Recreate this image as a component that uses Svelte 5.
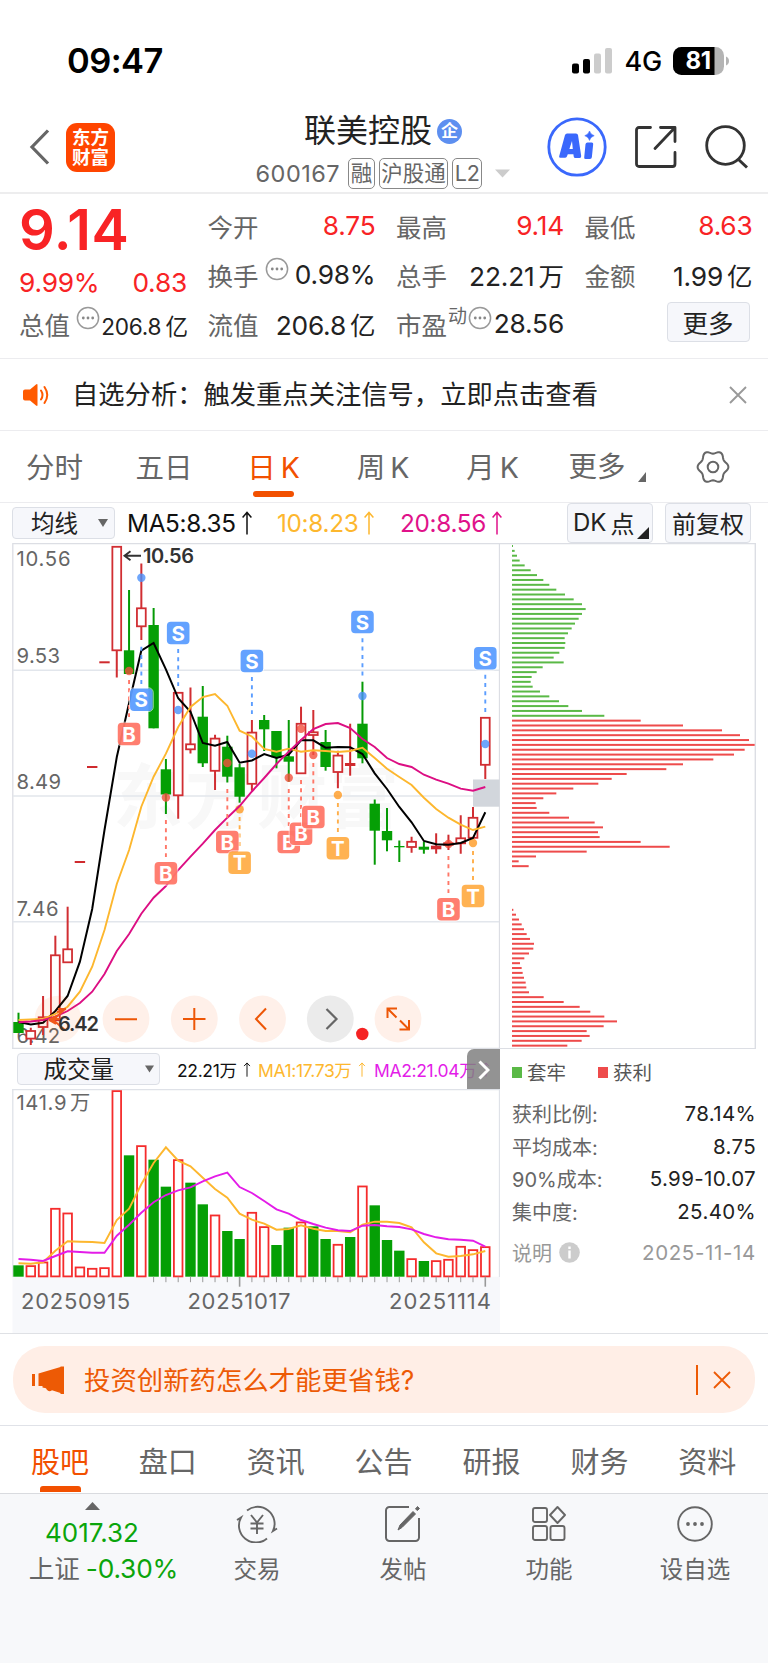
<script>
  const X0 = 18.5;
  const STEP = 12.284;
  const cx = (i) => X0 + STEP * i;

  // type, high, open/close top, open/close bottom, low (canvas units)
  const candles = [
    ['g', 1012.7, 1022, 1033, 1033], ['h', 1027.7, 1030.7, 1038.3, 1045], ['h', 996, 1017, 1026.7, 1035],
    ['h', 935.7, 955, 1020, 1020], ['h', 906.7, 949, 962, 962], ['d', 862, 862, 862, 862], ['d', 767, 767, 767, 767],
    ['d', 662.3, 662.3, 662.3, 662.3], ['h', 546, 546.5, 650, 677.5], ['g', 590, 650.3, 674, 674],
    ['h', 563.5, 608, 626, 640], ['g', 608, 625, 728.3, 728.3], ['g', 759, 769.3, 794.5, 814],
    ['h', 692, 692.5, 795, 818.7], ['h', 687.5, 744, 749, 753.5], ['g', 686, 716.7, 763.3, 767],
    ['h', 734.7, 738.3, 770.5, 790], ['g', 735.7, 746.7, 776.7, 782.5], ['g', 764, 767.3, 796.7, 802.7],
    ['h', 720, 732.3, 783.5, 790.7], ['g', 715, 720, 729.3, 751], ['g', 731, 731, 757.3, 768.3],
    ['g', 720, 756.3, 761.7, 781.7], ['h', 706.7, 723.5, 773, 773], ['h', 710, 732, 734.7, 755],
    ['g', 730, 742, 767, 770.7], ['h', 750.7, 755.3, 771.7, 788.3], ['r', 723.7, 763, 766, 775.7],
    ['g', 681.7, 723.7, 758.3, 763.3], ['g', 799.5, 803.7, 830.7, 864.7], ['g', 808, 831, 840.3, 851.3],
    ['g', 840.5, 846, 847.3, 862], ['h', 836.7, 841.5, 846.7, 852.7], ['g', 841.7, 846.7, 849.7, 853.7],
    ['r', 833.3, 845.7, 849.3, 853.7], ['r', 834.7, 842.3, 845.7, 850], ['h', 815.3, 838, 843, 853.7],
    ['h', 807, 817.5, 837.5, 837.5], ['h', 717, 717.5, 764.5, 779]
  ];

  const ma5 = [1022, 1024.5, 1022.7, 1011, 996, 961.7, 909, 830, 757, 703, 650.7, 643, 669.3, 698.3, 711.7, 743, 745.7, 742, 762.7, 760.5, 754, 758, 754.7, 740.3, 740.3, 747.7, 747, 747.3, 754, 773.3, 789, 807, 822.3, 841, 844.3, 844.7, 843, 838, 812.3];
  const ma10 = [1020, 1019.5, 1019, 1014, 1006.7, 991.7, 966.7, 930, 884, 850, 806.7, 776.7, 753.7, 727, 707, 697, 694, 705.7, 730.7, 736.5, 749, 751.7, 748.7, 751.7, 750.3, 751, 752, 751, 747.7, 758, 768.7, 777, 785, 797.7, 809, 817.7, 824.7, 830, 826.7];
  const ma20 = [1022.3, 1021.5, 1020, 1016.7, 1011, 1003, 991.7, 974, 951, 934, 913.7, 897.7, 886, 870, 856.7, 843.7, 830, 817.7, 806, 791.5, 778, 764, 751.7, 740, 729, 724, 723, 728, 739, 747, 758, 764, 767, 774.7, 779.7, 783.7, 788.7, 790.7, 787];

  // kind, candle index, label y, dash start, dash end, dot y
  const markers = [
    ['B', 9, 734, 680, 717, 671], ['S', 10, 699.7, 646.7, 684, 577.7], ['B', 12, 873.3, 820, 857, 797.5],
    ['S', 13, 633, 649, 686, 710], ['B', 17, 842, 789, 826, 763], ['T', 18, 862.7, 817, 846, 809.3],
    ['S', 19, 661, 677, 714, 753.7], ['B', 22, 842, 789, 826, 777.7], ['B', 23, 833.7, 780, 817, 728.7],
    ['B', 24, 817, 763, 800, 755], ['T', 26, 848.3, 803, 832, 795], ['S', 28, 622, 638.3, 675.7, 696],
    ['B', 35, 909.3, 856, 893, 844], ['T', 37, 896, 851, 880, 843], ['S', 38, 658.3, 674.7, 712, 744]
  ];
  const tone = { S: '#5b9dff', B: '#ff7768', T: '#ffae49' };
  const dotTone = { S: '#4a90fa', B: '#f4503c', T: '#ff9a22' };

  const volumes = [676, 676, 665, 504, 518, 680, 684, 682, 151, 346, 316, 359, 440, 358, 428, 493, 524, 573, 597, 516, 559, 615, 563, 545, 559, 597, 612, 591, 437, 496, 600, 632, 655, 663, 661, 657, 618, 628, 619];
  const up = [0,1,1,1,1,1,1,1,1,0,1,0,0,1,0,0,1,0,0,1,1,0,0,1,0,0,1,0,1,0,0,0,1,0,1,1,1,1,1];
  const vma1 = [670, 671, 667, 632, 604, 605, 606, 609, 540, 506, 433, 369, 322, 362, 379, 413, 447, 473, 521, 539, 551, 569, 567, 556, 566, 573, 573, 577, 554, 545, 545, 549, 562, 607, 640, 650, 648, 643, 633];
  const vma2 = [657, 659, 663, 648, 634, 636, 638, 638, 587, 554, 518, 487, 465, 451, 442, 424, 409, 398, 441, 459, 483, 508, 521, 540, 552, 563, 571, 573, 557, 555, 559, 561, 568, 582, 592, 598, 599, 602, 620];
  const vy = (v) => 1040 + v / 3;
  const line = (a, f = (v) => v) => a.map((v, i) => `${cx(i).toFixed(1)},${f(v).toFixed(1)}`).join(' ');

  const chipsTop = [39, 44, 51, 59, 74, 92, 111, 130, 148, 169, 195, 221, 246, 257, 246, 236, 225, 215, 204, 194, 196, 194, 178, 161, 191, 128, 110, 95, 92, 98, 120, 148, 177, 205, 246, 313];
  const chipsMid = [422, 549, 666, 720, 747, 764, 734, 702, 640, 549, 499, 380, 335, 295, 220, 169, 130, 107, 110, 148, 207, 284, 309, 294, 299, 422, 509, 260, 108, 56, 86];
  const chipsLow = [40, 48, 57, 65, 72, 80, 90, 102, 100, 87, 73, 60, 65, 68, 72, 77, 79, 87, 131, 191, 239, 271, 313, 351, 311, 260, 269, 245, 202];
  const chip = (arr, start, color) => arr.map((v, i) => ({ y: 546 + (start + i) * 4.851, w: (v - 36) / 3, color }));
  const chips = [...chip(chipsTop, 0, '#5ab946'), ...chip(chipsMid, 36, '#ee4b4b'), ...chip(chipsLow, 75, '#ee4b4b')];

  // six-lobed outline of the settings gear
  const gear = Array.from({ length: 72 }, (_, k) => {
    const t = (k * Math.PI) / 36;
    const r = 13.9 + 1.5 * Math.cos(6 * t);
    return `${(18 + r * Math.cos(t)).toFixed(2)},${(17 + 1.07 * r * Math.sin(t)).toFixed(2)}`;
  }).join(' ');

  const stats = [['获利比例:', '78.14%'], ['平均成本:', '8.75'], ['90%成本:', '5.99-10.07'], ['集中度:', '25.40%']];
  const tabs = ['股吧', '盘口', '资讯', '公告', '研报', '财务', '资料'];
</script>

{#snippet more()}
  <svg class="dots" width="24" height="24" viewBox="0 0 24 24">
    <circle cx="12" cy="12" r="10.6" fill="none" stroke="#999" stroke-width="1.5" />
    <circle cx="7.3" cy="12" r="1.4" fill="#888" /><circle cx="12" cy="12" r="1.4" fill="#888" /><circle cx="16.7" cy="12" r="1.4" fill="#888" />
  </svg>
{/snippet}

{#snippet arrow(w, h)}
  <svg class="arr" width={w} height={h} viewBox="0 0 12 24" preserveAspectRatio="none">
    <path d="M6 23.5V1.5M1.6 6.5L6 1.5l4.4 5" fill="none" stroke="currentColor" stroke-width="1.5" />
  </svg>
{/snippet}

<div class="page">
  <div class="status">
    <span class="time">09:47</span>
    <div class="sys">
      <svg width="40" height="26" viewBox="0 0 40 26">
        <rect x="0" y="15.5" width="7" height="10" rx="2" /><rect x="11" y="11" width="7" height="14.5" rx="2" />
        <rect x="22" y="5.5" width="7" height="20" rx="2" fill="#ccc" /><rect x="33" y="0" width="7" height="25.5" rx="2" fill="#ccc" />
      </svg>
      <span class="net">4G</span>
      <svg width="57" height="28" viewBox="0 0 57 28">
        <defs><clipPath id="cell"><rect width="51" height="28" rx="8.5" /></clipPath></defs>
        <g clip-path="url(#cell)"><rect width="51" height="28" fill="#b4b4b4" /><rect width="41.5" height="28" /></g>
        <path d="M53 9.5c4 1.4 4 7.6 0 9z" fill="#b4b4b4" />
        <text x="25" y="22.4" text-anchor="middle" class="bat">81</text>
      </svg>
    </div>
  </div>

  <header>
    <div class="left">
      <svg width="22" height="38" viewBox="0 0 22 38"><path d="M19 2.5L3 19l16 16.5" fill="none" stroke="#666" stroke-width="3.2" /></svg>
      <div class="logo"><span>东方</span><span>财富</span></div>
    </div>
    <div class="mid">
      <div class="name">联美控股<span class="qi">企</span></div>
      <div class="code"><span class="num">600167</span><b>融</b><b>沪股通</b><b>L2</b>
        <svg width="15" height="9" viewBox="0 0 15 9"><path d="M0 .5h15L7.5 8.500z" fill="#ccc" /></svg></div>
    </div>
    <div class="right">
      <svg width="60" height="60" viewBox="0 0 60 60">
        <circle cx="30" cy="30" r="28.2" fill="#fff" stroke="#3a68fc" stroke-width="2.800" />
        <path fill-rule="evenodd" d="M20 16.500h9q1.600 0 2 1.600L34.200 39q.2 2-1.600 2h-4.200q-1.500 0-1.700-1.500l-.3-2.300h-5.600l-.9 2.200q-.6 1.400-2 1.400h-4.100q-2.200 0-1.500-2L18 18q.6-1.500 2-1.500zM25 24l-2.600 8h3.400z" fill="#3a68fc" />
        <path d="M40.500 25.500h4.300q1.600 0 1.400 1.600L44.900 40q-.2 2-2 2h-4.300q-1.600 0-1.400-1.600L38.500 27.300q.2-1.800 2-1.800z" fill="#3a68fc" />
        <path d="M42.500 14q1 3.600 4.700 4.700-3.700 1-4.700 4.700-1-3.700-4.700-4.700 3.700-1.100 4.700-4.700z" fill="#3a68fc" stroke="#3a68fc" stroke-width=".6" />
      </svg>
      <svg width="42" height="42" viewBox="0 0 42 42"><path d="M15.500 1.500H4a2.500 2.500 0 0 0-2.500 2.500v34A2.500 2.500 0 0 0 4 40.500h33.500a2.500 2.500 0 0 0 2.500-2.500V26.500M25.500 1.500H40V15.500M39.500 2L20 22.500" fill="none" stroke="#333" stroke-width="2.800" stroke-linecap="round" stroke-linejoin="round" /></svg>
      <svg width="44" height="44" viewBox="0 0 44 44"><circle cx="20.500" cy="20.500" r="18.800" fill="none" stroke="#333" stroke-width="2.800" /><path d="M33 34l9 8.500" stroke="#333" stroke-width="3" /></svg>
    </div>
  </header>

  <section class="quote">
    <div class="col first">
      <div class="price">9.14</div>
      <div class="cell red chg"><span class="n">9.99%</span><span class="n">0.83</span></div>
      <div class="cell"><i>总值</i>{@render more()}<span class="n small">206.8<u>亿</u></span></div>
    </div>
    <div class="col">
      <div class="cell"><i>今开</i><span class="n red">8.75</span></div>
      <div class="cell"><i>换手</i>{@render more()}<span class="n">0.98%</span></div>
      <div class="cell"><i>流值</i><span class="n">206.8<u>亿</u></span></div>
    </div>
    <div class="col">
      <div class="cell"><i>最高</i><span class="n red">9.14</span></div>
      <div class="cell"><i>总手</i><span class="n">22.21<u>万</u></span></div>
      <div class="cell pe"><i>市盈</i><sup>动</sup>{@render more()}<span class="n">28.56</span></div>
    </div>
    <div class="col">
      <div class="cell"><i>最低</i><span class="n red">8.63</span></div>
      <div class="cell"><i>金额</i><span class="n">1.99<u>亿</u></span></div>
      <div class="cell end"><button class="btn morebtn">更多</button></div>
    </div>
  </section>

  <section class="notice">
    <svg width="28" height="24" viewBox="0 0 28 24"><path d="M2 6.500h5L13 1.500q1.500-1 1.500.5v20q0 1.500-1.500.5L7 17.500H2a2 2 0 0 1-2-2v-7a2 2 0 0 1 2-2z" fill="#ff5a00" /><path d="M18 7.500q3 4.500 0 9M21.500 4q5.500 8 0 16" fill="none" stroke="#ff5a00" stroke-width="2" stroke-linecap="round" /></svg>
    <p>自选分析：触发重点关注信号，立即点击查看</p>
    <svg width="18" height="18" viewBox="0 0 18 18"><path d="M1 1l16 16M17 1L1 17" stroke="#999" stroke-width="1.900" /></svg>
  </section>

  <nav class="periods">
    <span>分时</span><span>五日</span><span class="on">日<em>K</em></span><span>周<em>K</em></span><span>月<em>K</em></span>
    <span class="drop">更多<svg width="8" height="10" viewBox="0 0 8 10"><path d="M8 0v10H0z" fill="#666" /></svg></span>
    <svg width="36" height="34" viewBox="0 0 36 34" fill="none" stroke="#666" stroke-width="2"><polygon points={gear} /><circle cx="18" cy="17" r="5.300" /></svg>
  </nav>

  <div class="mabar">
    <button class="btn sel"><span>均线</span><svg width="10" height="8" viewBox="0 0 10 8"><path d="M0 0h10L5 8z" fill="#666" /></svg></button>
    <span class="ma k">MA5:8.35{@render arrow(12, 24)}</span>
    <span class="ma o">10:8.23{@render arrow(12, 24)}</span>
    <span class="ma p">20:8.56{@render arrow(12, 24)}</span>
    <button class="btn dk">DK<em>点</em><svg width="12" height="12" viewBox="0 0 12 12"><path d="M12 0v12H0z" fill="#222" /></svg></button>
    <button class="btn fq">前复权</button>
  </div>

  <main>
    <div class="chart">
      <svg class="kline" width="488" height="506" viewBox="12 543 488 506">
        <text x="113" y="823" class="mark" textLength="286">东方财富</text>
        <path d="M12.800 543.500H500M12.800 543v506M12 1048.500H500M499.500 543v506" stroke="#dcdee4" stroke-width="1.300" fill="none" />
        <path d="M13 670.200H499M13 796H499M13 921.700H499" stroke="#e2e6ec" stroke-width="1.500" />
        {#each [['10.56', 565.600, 54], ['9.53', 663.300, 43.500], ['8.49', 789.300, 44.500], ['7.46', 916.300, 42], ['6.42', 1042.500, 43.500]] as [t, y, w]}
          <text x="16.500" {y} class="axis" textLength={w}>{t}</text>
        {/each}
        {#each candles as [k, hi, a, b, lo], i}
          {@const x = cx(i)}
          {#if k === 'd'}
            <path d="M{x - 5.200} {hi}h10.400" stroke="#cf2a2e" stroke-width="2" />
          {:else if k === 'h'}
            <path d="M{x} {hi}V{a}M{x} {b}V{lo}" stroke="#d12e32" stroke-width="2" />
            <rect x={x - 4.400} y={a + 0.300} width="8.800" height={b - a} fill="#fff" stroke="#d12e32" stroke-width="1.800" />
          {:else}
            <path d="M{x} {hi}V{lo}" stroke={k === 'g' ? '#059a05' : '#cf2a2e'} stroke-width="2" />
            <rect x={x - 5.200} y={a} width="10.400" height={b - a} fill={k === 'g' ? '#059f05' : '#cf2a2e'} />
          {/if}
        {/each}
        <rect x="473" y="779.500" width="26.500" height="27.200" fill="#d2d6dc" />
        {#each markers as [k, i, , , , dot]}
          <circle cx={cx(i)} cy={dot} r="4.200" fill={dotTone[k]} opacity=".8" />
        {/each}
        <polyline points={line(ma5)} fill="none" stroke="#000" stroke-width="2" />
        <polyline points={line(ma10)} fill="none" stroke="#fdb72e" stroke-width="1.900" />
        <polyline points={line(ma20)} fill="none" stroke="#dc0e83" stroke-width="1.900" />
        {#each markers as [k, i, y, d0, d1]}
          <path d="M{cx(i)} {d0}V{d1}" stroke={tone[k]} stroke-width="1.900" stroke-dasharray="4 4.300" />
        {/each}
        {#each markers as [k, i, y]}
          <rect x={cx(i) - 11.800} y={y - 11.800} width="23.600" height="23.600" rx="4.500" fill="none" stroke="#fff" stroke-width="1" opacity=".7" />
          <rect x={cx(i) - 11.300} y={y - 11.300} width="22.600" height="22.600" rx="4" fill={tone[k]} opacity=".95" />
          <text x={cx(i)} y={y + 7.500} class="flag">{k}</text>
        {/each}
        <path d="M141 555.700h-16M130.500 551.200l-6 4.500 6 4.500" stroke="#333" stroke-width="1.900" fill="none" />
        <text x="143" y="563.200" class="peak" textLength="51">10.56</text>
        <circle cx="58" cy="1019" r="23.300" fill="#ff5a00" opacity=".08" />
        <path d="M49 1019h11M66 1009h-8M57 1012l9-3M52 1021l12-11M52 1019l13 11M49 1020l7-4M49 1020l7 4" stroke="#f1571b" stroke-width="2" fill="none" />
        <text x="58" y="1030.500" class="peak" textLength="41">6.42</text>
        {#each [126, 194.300, 262.500, 398] as x}
          <circle cx={x} cy="1019" r="23.400" fill="#fff0e9" />
        {/each}
        <circle cx="330.300" cy="1019" r="23.400" fill="#ebebeb" />
        <g fill="none" stroke="#ed5606" stroke-width="2">
          <path d="M115 1019.200h22M183 1019h22.500M194.300 1008v22M266 1008.500L256 1019l10 10.500" />
          <path d="M387.500 1018v-9.500h9.500M388 1009l8.500 8.500M399.500 1029.500h9.500V1020M400 1020.500l8.500 8.500" />
        </g>
        <path d="M326.500 1009l10 10-10 10" fill="none" stroke="#666" stroke-width="2.200" />
        <circle cx="362.300" cy="1034" r="6.200" fill="#f52222" />
      </svg>

      <div class="volbar">
        <button class="btn sel vs"><span>成交量</span><svg width="9" height="8" viewBox="0 0 10 8"><path d="M0 0h10L5 8z" fill="#666" /></svg></button>
        <span class="v k">22.21万{@render arrow(8, 15)}</span>
        <span class="v o">MA1:17.73万{@render arrow(8, 15)}</span>
        <span class="v m">MA2:21.04万{@render arrow(8, 15)}</span>
        <span class="next"><svg width="12" height="20" viewBox="0 0 12 20"><path d="M1.500 1.500L10 10l-8.500 8.500" fill="none" stroke="#fff" stroke-width="3" /></svg></span>
      </div>

      <svg class="vol" width="488" height="244" viewBox="12 1089 488 244">
        <rect x="12.500" y="1276.700" width="487.500" height="57" fill="#f7f8fb" />
        <path d="M12 1089.500H500M12.800 1089V1277M499.500 1089V1277" stroke="#dfe2e8" stroke-width="1.300" fill="none" />
        <text x="16.500" y="1109.700" class="axis" textLength="50">141.9</text><text x="70" y="1109.700" class="axis">万</text>
        {#each volumes as v, i}
          {#if up[i]}
            <rect x={cx(i) - 4.300} y={vy(v) + 0.800} width="8.600" height={1275.600 - vy(v)} fill="#fff" stroke="#f52c2c" stroke-width="1.800" />
          {:else}
            <rect x={cx(i) - 5.200} y={vy(v)} width="10.400" height={1276.700 - vy(v)} fill="#059f05" />
          {/if}
          {#if i > 10}
            <path d="M{cx(i)} 1276.700v{i === 18 || i === 38 ? 10 : 5.500}" stroke="#999" stroke-width={i === 18 || i === 38 ? 1.600 : 1} />
          {/if}
        {/each}
        <polyline points={line(vma1, vy)} fill="none" stroke="#fdb72e" stroke-width="1.900" />
        <polyline points={line(vma2, vy)} fill="none" stroke="#e31ce8" stroke-width="1.900" />
        <text x="21" y="1308.500" class="date" textLength="109">20250915</text>
        <text x="187.500" y="1308.500" class="date" textLength="103">20251017</text>
        <text x="389" y="1308.500" class="date" textLength="102">20251114</text>
      </svg>
    </div>

    <aside>
      <svg width="256" height="506" viewBox="500 543 256 506">
        <path d="M500 543.500H755.500M755.300 543v506M500 1048.700H756" stroke="#dcdee4" stroke-width="1.400" fill="none" />
        {#each chips as c}<rect x="512" y={c.y - 1} width={c.w} height="2" fill={c.color} />{/each}
      </svg>
      <div class="legend"><s class="g"></s><span>套牢</span><s></s><span>获利</span></div>
      {#each stats as [k, v]}<div class="stat"><span>{k}</span><strong>{v}</strong></div>{/each}
      <div class="stat note"><span>说明</span><svg width="21" height="21" viewBox="0 0 21 21"><circle cx="10.500" cy="10.500" r="10.300" fill="#ccc" /><path d="M10.500 8.500v8M10.500 4.500v2.500" stroke="#fff" stroke-width="2.400" /></svg><strong>2025-11-14</strong></div>
    </aside>
  </main>

  <section class="promo">
    <div class="pill">
      <svg width="33" height="28" viewBox="0 0 33 28"><path d="M0 8h3v12H0zM6.500 7.500L28.500 1V.500H32V28h-3.500v-1L20 24.200q-3 2.500-5.500-1l-.5-1-3.500-.7v-1.500h-4z" fill="#ed5a05" /></svg>
      <p>投资创新药怎么才能更省钱?</p><hr />
      <svg width="18" height="18" viewBox="0 0 18 18"><path d="M1 1l16 16M17 1L1 17" stroke="#ed5a05" stroke-width="1.800" /></svg>
    </div>
  </section>

  <nav class="tabs">{#each tabs as t, i}<span class:on={i === 0}>{t}</span>{/each}</nav>

  <footer>
    <div class="index">
      <svg width="15" height="8" viewBox="0 0 15 8"><path d="M7.500 0L15 8H0z" fill="#666" /></svg>
      <span class="pt">4017.32</span>
      <span class="ix">上证<b>-0.30%</b></span>
    </div>
    <div class="act">
      <svg width="42" height="38" viewBox="0 0 42 38" fill="none" stroke="#666" stroke-width="1.900"><path d="M11 5.500a17 17 0 0 1 26 20.500l4-2.500M31 33.500A17 17 0 0 1 5 12.500L1 15M15 10l6 7.500L27 10M14.500 18.500h13M14.500 23.500h13M21 17.500V29" /></svg>
      <span>交易</span></div>
    <div class="act">
      <svg width="38" height="38" viewBox="0 0 38 38" fill="none" stroke="#666" stroke-width="2"><path d="M25 2H5.500A3.500 3.500 0 0 0 2 5.500v27A3.500 3.500 0 0 0 5.500 36h26a3.500 3.500 0 0 0 3.500-3.500V13" /><path d="M14 25l2-5L29 6.500l2.500 2.500L18 22.500z M31.500 4l2-2.500 2 2-2 2z" fill="#666" stroke-width="1" /></svg>
      <span>发帖</span></div>
    <div class="act">
      <svg width="34" height="36" viewBox="0 0 34 36" fill="none" stroke="#666" stroke-width="1.900"><rect x="1" y="2" width="14" height="14" rx="2" /><rect x="1" y="20" width="14" height="14" rx="2" /><rect x="18.500" y="20" width="14" height="14" rx="2" /><path d="M25.500 1l7.500 8-7.500 8-7.500-8z" stroke-linejoin="round" /></svg>
      <span>功能</span></div>
    <div class="act">
      <svg width="36" height="36" viewBox="0 0 36 36"><circle cx="18" cy="18" r="16.800" fill="none" stroke="#666" stroke-width="1.900" /><circle cx="11" cy="18" r="1.900" fill="#666" /><circle cx="18" cy="18" r="1.900" fill="#666" /><circle cx="25" cy="18" r="1.900" fill="#666" /></svg>
      <span>设自选</span></div>
  </footer>
</div>

<style>
  :global(body) { margin: 0; background: #fff; }
  .page { width: 768px; height: 1663px; overflow: hidden; display: flex; flex-direction: column; background: #fff; color: #222; font-family: Inter, "Noto Sans CJK SC", sans-serif; }
  .page * { box-sizing: border-box; }
  header, section, nav, main, .status, .mabar { flex: none; }
  svg { display: block; flex: none; }
  p { margin: 0; }
  i, em, u, s { font-style: normal; text-decoration: none; }
  span, p, i, b, strong { white-space: nowrap; }

  .status { height: 107px; display: flex; justify-content: space-between; padding: 40px 38px 0 67px; align-items: flex-start; }
  .time { font-size: 34.500px; line-height: 41px; font-weight: 600; color: #000; letter-spacing: -0.600px; }
  .sys { display: flex; align-items: center; height: 41px; }
  .net { font-size: 27px; font-weight: 500; margin: 1px 11px 0 12px; letter-spacing: -0.200px; color: #000; }
  .bat { font: 700 24px Inter, sans-serif; fill: #fff; letter-spacing: -0.500px; }

  header { height: 87px; border-bottom: 2px solid #ededee; display: grid; grid-template-columns: 1fr auto 1fr; padding: 0 19px 0 29px; }
  .left { display: flex; align-items: center; gap: 15px; margin-top: -5px; }
  .logo { width: 49px; height: 49px; border-radius: 11px; background: #ff4500; color: #fff; display: flex; flex-direction: column; align-items: center; justify-content: center; font-weight: 700; font-size: 18.500px; line-height: 20px; }
  .mid { display: flex; flex-direction: column; align-items: center; padding-right: 12px; }
  .name { height: 48px; font-size: 32px; line-height: 46px; display: flex; align-items: center; color: #222; }
  .qi { width: 25px; height: 25px; border-radius: 50%; background: #5d8ff0; color: #fff; font-size: 17px; line-height: 24px; text-align: center; margin-left: 5px; font-weight: 700; }
  .code { display: flex; align-items: center; height: 36px; color: #666; }
  .num { font-size: 23.500px; letter-spacing: 0.500px; margin-right: 8px; }
  .code b { height: 31px; border: 1.500px solid #888; border-radius: 5px; font-weight: 400; font-size: 21.500px; line-height: 28px; padding: 0 1.500px; margin-right: 4px; }
  .code svg { margin-left: 9px; }
  .right { display: flex; justify-content: flex-end; align-items: center; gap: 28px; margin-top: -5px; }

  .quote { height: 165px; border-bottom: 1px solid #ececef; display: grid; grid-template-columns: 168px 168px 168px 168px; column-gap: 20.500px; padding: 7px 0 0 19px; }
  .col { display: flex; flex-direction: column; }
  .cell { height: 49px; display: flex; align-items: center; font-size: 25.500px; }
  .cell i { color: #666; }
  .cell .n { margin-left: auto; font-size: 26.300px; letter-spacing: -0.200px; }
  .cell u { margin-left: 4px; letter-spacing: 0; font-size: 25.500px; }
  .cell .small { font-size: 22.600px; padding-top: 4px; margin-right: -1px; }
  .cell .small u { font-size: 22.600px; }
  .cell .red, .red { color: #f82325; }
  .price { height: 57px; font-size: 56px; line-height: 58px; font-weight: 600; color: #f82325; letter-spacing: 0.600px; }
  .chg { height: 41px; justify-content: space-between; padding-top: 7px; }
  .chg .n:first-child { margin: 0; }
  .dots { margin: -11px 0 0 6px; }
  .pe sup { font-size: 19px; line-height: 20px; color: #666; margin: -14px 0 0 1px; vertical-align: 0; }
  .pe .dots { margin-left: 1px; }
  .end { justify-content: flex-end; padding-right: 3px; }
  .btn { font-family: inherit; background: #f6f7fb; border: 1.500px solid #dcdfe6; border-radius: 4px; color: #222; padding: 0 0 2px; margin: 0; display: flex; align-items: center; justify-content: center; white-space: nowrap; }
  .morebtn { width: 83px; height: 40px; font-size: 25.500px; margin-top: -3px; }

  .notice { height: 72px; border-bottom: 1px solid #ececef; display: flex; align-items: center; padding: 0 21px 0 23px; }
  .notice p { flex: 1; margin: -4px 0 0 21px; font-size: 26.300px; color: #222; }

  .periods { height: 72px; border-bottom: 1px solid #ececef; display: flex; align-items: center; padding: 0 37px 0 26px; color: #666; font-size: 28.500px; }
  .periods span { height: 70px; line-height: 71px; width: 57px; margin-right: 52.500px; text-align: center; }
  .periods em { margin-left: 5px; }
  .periods .on { color: #f25000; position: relative; }
  .periods .on::after { content: ""; position: absolute; left: 8px; bottom: 5px; width: 41px; height: 6px; border-radius: 3px; background: #f25000; }
  .periods .drop { width: 77px; display: flex; align-items: center; gap: 12px; margin: 0 auto 0 -5px; }
  .periods .drop svg { margin-top: 20px; }

  .mabar { height: 40px; display: flex; align-items: center; padding: 0 17px 0 12px; }
  .sel { width: 103px; height: 32px; font-size: 23.500px; justify-content: flex-end; gap: 20px; padding-right: 6px; }
  .sel svg { margin-top: 2px; }
  .ma { display: flex; align-items: center; font-size: 24.300px; letter-spacing: -0.300px; }
  .ma .arr { margin-left: 5px; }
  .k { color: #111; }
  .o { color: #fdb72e; }
  .p { color: #e0128a; }
  .ma.k { margin-left: 12px; width: 150px; }
  .ma.o { width: 123px; }
  .dk { margin-left: auto; width: 86px; height: 40px; font-size: 24px; justify-content: flex-start; padding-left: 5px; }
  .dk em { margin-left: 4px; }
  .dk svg { margin: 22px 0 0 3px; }
  .fq { width: 86px; height: 40px; font-size: 24px; margin-left: 12px; }

  main { height: 791px; display: flex; padding-left: 12px; border-bottom: 1px solid #dfe1e5; }
  .chart { width: 488px; }
  .mark { font: 700 70px "Noto Sans CJK SC", sans-serif; fill: #f8f8f8; }
  .axis { font: 400 20.300px Inter, "Noto Sans CJK SC", sans-serif; fill: #666; }
  .peak { font: 600 20px Inter, sans-serif; fill: #333; }
  .flag { font: 700 20.500px Inter, sans-serif; fill: #fff; text-anchor: middle; }
  .date { font: 400 22px Inter, sans-serif; fill: #666; }
  .volbar { height: 40px; display: flex; align-items: center; position: relative; padding-left: 5px; overflow: hidden; }
  .vs { width: 143px; gap: 31px; padding-right: 5px; }
  .v { display: flex; align-items: center; font-size: 17.500px; letter-spacing: -0.350px; }
  .v .arr { margin-left: 6px; }
  .v.k { margin-left: 17px; width: 81px; }
  .v.o { width: 116px; }
  .m { color: #e31ce8; }
  .next { position: absolute; right: 0; top: 0; width: 33px; height: 41px; background: rgba(128, 128, 128, 0.85); border-radius: 7px 0 0 0; display: flex; align-items: center; justify-content: center; }

  aside { width: 256px; }
  .legend { height: 48px; display: flex; align-items: center; padding: 0 0 4px 12px; font-size: 19.500px; color: #555; }
  .legend s { width: 10px; height: 11px; background: #ee4b4b; margin: 2px 5px 0 0; }
  .legend .g { background: #5ab946; }
  .legend span { margin-right: 32px; }
  .stat { height: 32.800px; display: flex; align-items: center; padding: 0 0 0 12px; font-size: 20px; color: #666; }
  .stat strong { margin-left: auto; font-weight: 400; color: #222; font-size: 20.500px; letter-spacing: 0.350px; }
  .note { height: 48px; color: #999; }
  .note svg { margin-left: 7px; }
  .note strong { color: #999; letter-spacing: 0.650px; }

  .promo { height: 92px; border-bottom: 1px solid #e0e2e8; padding: 12px 13px 0; }
  .pill { height: 67px; border-radius: 32px; background: #ffeee6; display: flex; align-items: center; padding: 0 24px 0 19px; color: #ed5a05; }
  .pill p { flex: 1; font-size: 26.400px; margin: -2px 0 0 19px; }
  hr { border: 0; width: 2px; height: 30px; background: #ed5a05; margin: 0 15px 0 0; }

  .tabs { height: 68px; border-bottom: 1px solid #d9dbdf; display: flex; padding-left: 6px; color: #666; font-size: 29px; }
  .tabs span { width: 107.900px; text-align: center; line-height: 73px; height: 67px; position: relative; }
  .tabs .on { color: #f25000; }
  .tabs .on::after { content: ""; position: absolute; left: 34px; bottom: 1px; width: 41px; height: 6px; border-radius: 3px 3px 0 0; background: #f25000; }

  footer { flex: 1; background: #f7f8fa; display: flex; color: #666; }
  .index { width: 184px; display: flex; flex-direction: column; align-items: center; padding-top: 8px; }
  .pt { color: #0ba50b; font-size: 26px; line-height: 32px; margin-top: 7px; }
  .ix { font-size: 25.500px; line-height: 34px; margin: 3px 0 0 23px; }
  .ix b { color: #0ba50b; font-weight: 400; font-size: 26.300px; margin-left: 6px; letter-spacing: -0.200px; }
  .act { width: 146px; display: flex; flex-direction: column; align-items: center; padding-top: 11px; font-size: 23.500px; }
  .act svg { height: 38px; }
  .act span { line-height: 34px; margin-top: 10px; }
</style>
